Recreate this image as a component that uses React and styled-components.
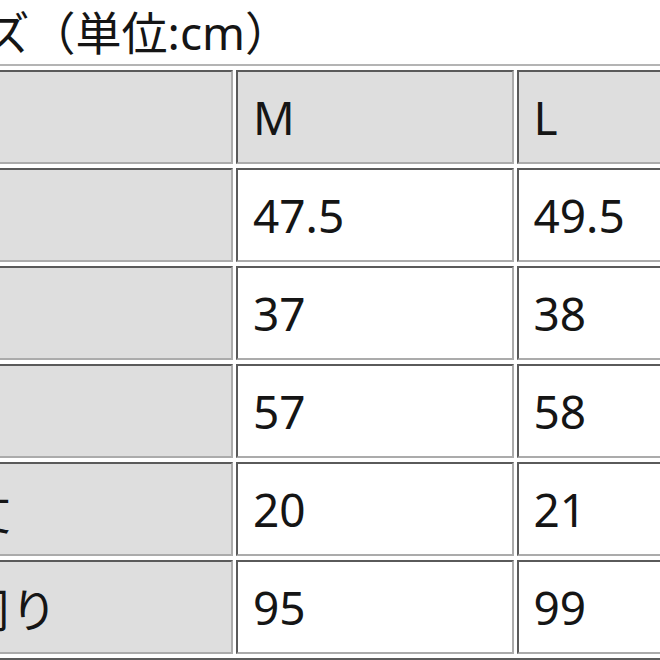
import styled, { createGlobalStyle } from "styled-components";

const GlobalStyle = createGlobalStyle`
   html, body {
      margin: 0;
      padding: 0;
      background: #ffffff;
      overflow: hidden;
   }
   body {
      font-family: "Noto Sans", "Noto Sans CJK JP", sans-serif;
      color: #111;
   }
`

const sizes = ["M", "L"]

const rows = [
   { label: "身幅", values: ["47.5", "49.5"] },
   { label: "肩幅", values: ["37", "38"] },
   { label: "着丈", values: ["57", "58"] },
   { label: "半袖丈", values: ["20", "21"] },
   { label: "胸囲周り", values: ["95", "99"] },
]

const App = () => {
   return (
      <>
         <GlobalStyle />
         <Page>
            <Title>サイズ（単位:cm）</Title>
            <SizeTable>
               <colgroup>
                  <col style={{ width: 374 }} />
                  <col style={{ width: 277.5 }} />
                  <col style={{ width: 277.5 }} />
               </colgroup>
               <tbody>
                  <tr>
                     <Cell $head $label></Cell>
                     {sizes.map(s => <Cell $head key={s}>{s}</Cell>)}
                  </tr>
                  {
                     rows.map(r => (
                        <tr key={r.label}>
                           <Cell $head $label>{r.label}</Cell>
                           {r.values.map((v, i) => <Cell key={`${r.label}-${i}`}>{v}</Cell>)}
                        </tr>
                     ))
                  }
               </tbody>
            </SizeTable>
         </Page>
      </>
   )
}

// styles
const Page = styled.div`
   margin-left: -146px;
   width: 1000px;
`

const Title = styled.h2`
   margin: 0 0 0 39px;
   font-family: "Noto Sans", "Noto Sans CJK JP", sans-serif;
   font-weight: 400;
   font-size: 46px;
   line-height: 64px;
   white-space: nowrap;
   color: #151515;
`

const SizeTable = styled.table`
   table-layout: fixed;
   border-collapse: separate;
   border-spacing: 3.5px 4.6px;
   background: #ffffff;
   border-style: solid;
   border-width: 2.5px;
   border-color: #b4b4b4 #5c5c5c #5c5c5c #b4b4b4;
`

const Cell = styled.td`
   box-sizing: border-box;
   height: 94px;
   padding: 0 ${p => p.$label ? "12px" : "15px"};
   vertical-align: middle;
   text-align: left;
   font-size: 46px;
   font-weight: 400;
   color: #151515;
   white-space: nowrap;
   overflow: hidden;
   background: ${p => p.$head ? "#dedede" : "#ffffff"};
   border-style: solid;
   border-width: 2.5px;
   border-color: #5a5a5a #ababab #ababab #5a5a5a;
`

export default App;
